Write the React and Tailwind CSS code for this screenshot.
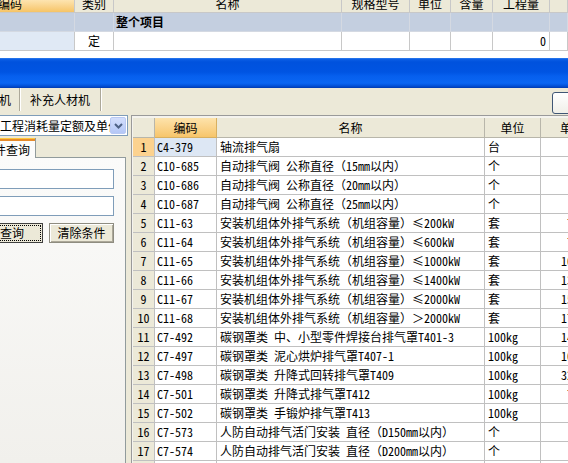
import React from "react";

const rows = [
  ["C4-379", "轴流排气扇", "台", ""],
  ["C10-685", "自动排气阀 公称直径（15mm以内）", "个", ""],
  ["C10-686", "自动排气阀 公称直径（20mm以内）", "个", ""],
  ["C10-687", "自动排气阀 公称直径（25mm以内）", "个", ""],
  ["C11-63", "安装机组体外排气系统（机组容量）≤200kW", "套", "745.09"],
  ["C11-64", "安装机组体外排气系统（机组容量）≤600kW", "套", "780.56"],
  ["C11-65", "安装机组体外排气系统（机组容量）≤1000kW", "套", "1050.32"],
  ["C11-66", "安装机组体外排气系统（机组容量）≤1400kW", "套", "1312.88"],
  ["C11-67", "安装机组体外排气系统（机组容量）≤2000kW", "套", "1583.40"],
  ["C11-68", "安装机组体外排气系统（机组容量）＞2000kW", "套", "1720.15"],
  ["C7-492", "碳钢罩类 中、小型零件焊接台排气罩T401-3", "100kg", "1468.20"],
  ["C7-497", "碳钢罩类 泥心烘炉排气罩T407-1", "100kg", "1093.61"],
  ["C7-498", "碳钢罩类 升降式回转排气罩T409", "100kg", "3215.70"],
  ["C7-501", "碳钢罩类 升降式排气罩T412", "100kg", "718.47"],
  ["C7-502", "碳钢罩类 手锻炉排气罩T413", "100kg", ""],
  ["C7-573", "人防自动排气活门安装 直径（D150mm以内）", "个", ""],
  ["C7-574", "人防自动排气活门安装 直径（D200mm以内）", "个", ""],
  ["C7-575", "人防自动排气活门安装 直径（D250mm以内）", "个", ""],
];

function TopTable() {
  const h = "h-[13px] overflow-hidden border-r border-b border-[#c8c8c8] bg-[#ece9d8] flex justify-center";
  const r2 = "h-[19px] border-r border-b border-[#d4d9e2] bg-[#c4cfe0] flex items-center";
  const r3 = "h-[19px] border-r border-b border-[#c8c8c8] bg-white flex items-center";
  return (
    <div className="grid grid-cols-[75px_39px_228px_68px_41px_42px_57px_1fr] text-[12px] leading-[18px]">
      <div className="h-[13px] overflow-hidden border-r border-b border-[#c8c8c8] bg-gradient-to-b from-[#fde4b0] to-[#f6c465] flex justify-start">
        <span className="leading-[12px] -mt-[2px] -ml-[2px]">编码</span>
      </div>
      <div className={h}><span className="leading-[12px] -mt-[2px]">类别</span></div>
      <div className={h}><span className="leading-[12px] -mt-[2px]">名称</span></div>
      <div className={h}><span className="leading-[12px] -mt-[2px]">规格型号</span></div>
      <div className={h}><span className="leading-[12px] -mt-[2px]">单位</span></div>
      <div className={h}><span className="leading-[12px] -mt-[2px]">含量</span></div>
      <div className={h}><span className="leading-[12px] -mt-[2px]">工程量</span></div>
      <div className={h}></div>

      <div className={r2}></div>
      <div className={r2}></div>
      <div className={r2 + " pl-[2px] font-bold"}>整个项目</div>
      <div className={r2}></div>
      <div className={r2}></div>
      <div className={r2}></div>
      <div className={r2}></div>
      <div className={r2}></div>

      <div className="h-[19px] border-r border-b border-[#c8c8c8] bg-[#e0e9f5]"></div>
      <div className={r3 + " justify-center"}>定</div>
      <div className={r3}></div>
      <div className={r3}></div>
      <div className={r3}></div>
      <div className={r3}></div>
      <div className={r3 + " justify-end pr-[3px]"}>0</div>
      <div className={r3}></div>
    </div>
  );
}

function TitleBar() {
  return (
    <div className="h-[30px] bg-[linear-gradient(to_bottom,#3a86ee_0px,#0c5fe6_1px,#0052dd_4px,#0054e2_14px,#065fee_18px,#0a66f3_25px,#0458e2_27px,#0046c6_29px,#0038ad_30px)]"></div>
  );
}

function Toolbar() {
  return (
    <div className="h-[27px] bg-[#ece9d8] flex items-start text-[12px]">
      <div className="h-[23px] w-[20px] shrink-0 flex items-center justify-end pr-[8px] overflow-hidden border-r border-[#aca899] shadow-[1px_0_0_#ffffff] whitespace-nowrap">
        人材机
      </div>
      <div className="h-[23px] w-[81px] shrink-0 flex items-center justify-center border-r border-[#aca899] shadow-[1px_0_0_#ffffff] whitespace-nowrap">
        补充人材机
      </div>
      <div className="flex-1"></div>
      <div className="mt-[4px] h-[22px] w-[30px] shrink-0 -mr-[14px] rounded-[3px] border border-[#3f5675] bg-gradient-to-b from-white to-[#f0efe8]"></div>
    </div>
  );
}

function LeftPanel() {
  return (
    <div className="w-[128px] shrink-0 flex flex-col text-[12px]">
      <div className="h-[21px] border-y border-r border-[#7f9db9] bg-white flex items-center overflow-hidden">
        <span className="whitespace-nowrap flex-1 overflow-hidden leading-[18px]">工程消耗量定额及单价表</span>
        <div className="h-[17px] w-[16px] mr-[1px] shrink-0 rounded-[2px] border border-[#b9c9f3] bg-gradient-to-b from-[#d3defc] to-[#b4c7f6] flex items-center justify-center">
          <svg width="9" height="6" viewBox="0 0 9 6">
            <path d="M1 1 L4.5 4.5 L8 1" stroke="#4d6185" strokeWidth="2" fill="none" />
          </svg>
        </div>
      </div>
      <div className="mt-[2px] h-[20px] flex">
        <div className="w-[36px] h-[20px] shrink-0 border-r border-[#919b9c] bg-[#fcfcfb] flex flex-col">
          <div className="h-[1px] bg-[#ffc83c]"></div>
          <div className="h-[2px] bg-[#e68b2c]"></div>
          <div className="flex-1 flex items-center justify-end pr-[5px] overflow-hidden whitespace-nowrap leading-[16px]">
            条件查询
          </div>
        </div>
        <div className="w-[90px] h-[20px] border-b border-[#919b9c]"></div>
      </div>
      <div className="w-[126px] flex-1 border-r border-[#919b9c] bg-gradient-to-b from-[#fbfbfa] to-[#f1f0ec] pt-[11px] flex flex-col">
        <div className="w-[114px] h-[20px] border-y border-r border-[#7f9db9] bg-white"></div>
        <div className="mt-[7px] w-[114px] h-[20px] border-y border-r border-[#7f9db9] bg-white"></div>
        <div className="mt-[7px] flex h-[20px]">
          <div className="w-[43px] h-[20px] border-y border-r border-[#404040] bg-[#ece9d8] p-[1px]">
            <div className="h-full border-y border-r border-dotted border-black flex items-center leading-[16px] -ml-[1px]">
              查询
            </div>
          </div>
          <div className="ml-[6px] w-[65px] h-[20px] border border-[#8e8c80] bg-[#ece9d8] flex items-center justify-center leading-[16px] shadow-[inset_1px_1px_0_#ffffff,inset_-1px_-1px_0_#aca899]">
            清除条件
          </div>
        </div>
      </div>
    </div>
  );
}

function DataTable() {
  const cols = "grid grid-cols-[22px_62px_268px_56px_65px] w-[473px]";
  const hd = "h-[20px] border-r border-b border-[#b8b6aa] bg-[#ece9d8] flex items-center justify-center";
  return (
    <div className="flex-1 min-w-0 overflow-hidden border-l border-t border-[#9a9a9a] bg-[#f4f3ee] pt-[2px] pl-[1px] text-[12px] leading-[18px]">
      <div className={cols}>
        <div className={hd}></div>
        <div className="h-[20px] border-r border-b border-[#d8b060] bg-gradient-to-b from-[#fde3ab] to-[#f7c56a] flex items-center justify-center">编码</div>
        <div className={hd}>名称</div>
        <div className={hd}>单位</div>
        <div className={hd + " justify-start pl-[19px]"}>单价</div>
      </div>
      {rows.map((r, i) => (
        <div key={i} className={cols}>
          <div
            className={
              "h-[19px] border-r border-b border-[#c0c0c0] flex items-center justify-center " +
              (i === 0 ? "bg-[#fcd28f]" : "bg-[#ece9d8]")
            }
          >
            {i + 1}
          </div>
          <div
            className={
              "h-[19px] border-r border-b border-[#c0c0c0] flex items-center pl-[2px] whitespace-nowrap overflow-hidden " +
              (i === 0 ? "bg-[#dde7f4]" : "bg-white")
            }
          >
            {r[0]}
          </div>
          <div className="h-[19px] border-r border-b border-[#c0c0c0] bg-white flex items-center pl-[3px] whitespace-nowrap overflow-hidden">
            {r[1]}
          </div>
          <div className="h-[19px] border-r border-b border-[#c0c0c0] bg-white flex items-center pl-[3px] whitespace-nowrap overflow-hidden">
            {r[2]}
          </div>
          <div className="h-[19px] border-r border-b border-[#c0c0c0] bg-white flex items-center justify-end pr-[2px] whitespace-nowrap overflow-hidden">
            {r[3]}
          </div>
        </div>
      ))}
    </div>
  );
}

export default function App() {
  return (
    <div className="w-[568px] h-[463px] overflow-hidden bg-white text-black font-['Noto_Sans_Mono_CJK_SC','Noto_Sans_CJK_SC',sans-serif] flex flex-col">
      <TopTable />
      <div className="h-[7px] bg-white"></div>
      <TitleBar />
      <Toolbar />
      <div className="flex-1 min-h-0 flex bg-[#ece9d8]">
        <LeftPanel />
        <div className="w-[3px] shrink-0"></div>
        <DataTable />
      </div>
    </div>
  );
}
